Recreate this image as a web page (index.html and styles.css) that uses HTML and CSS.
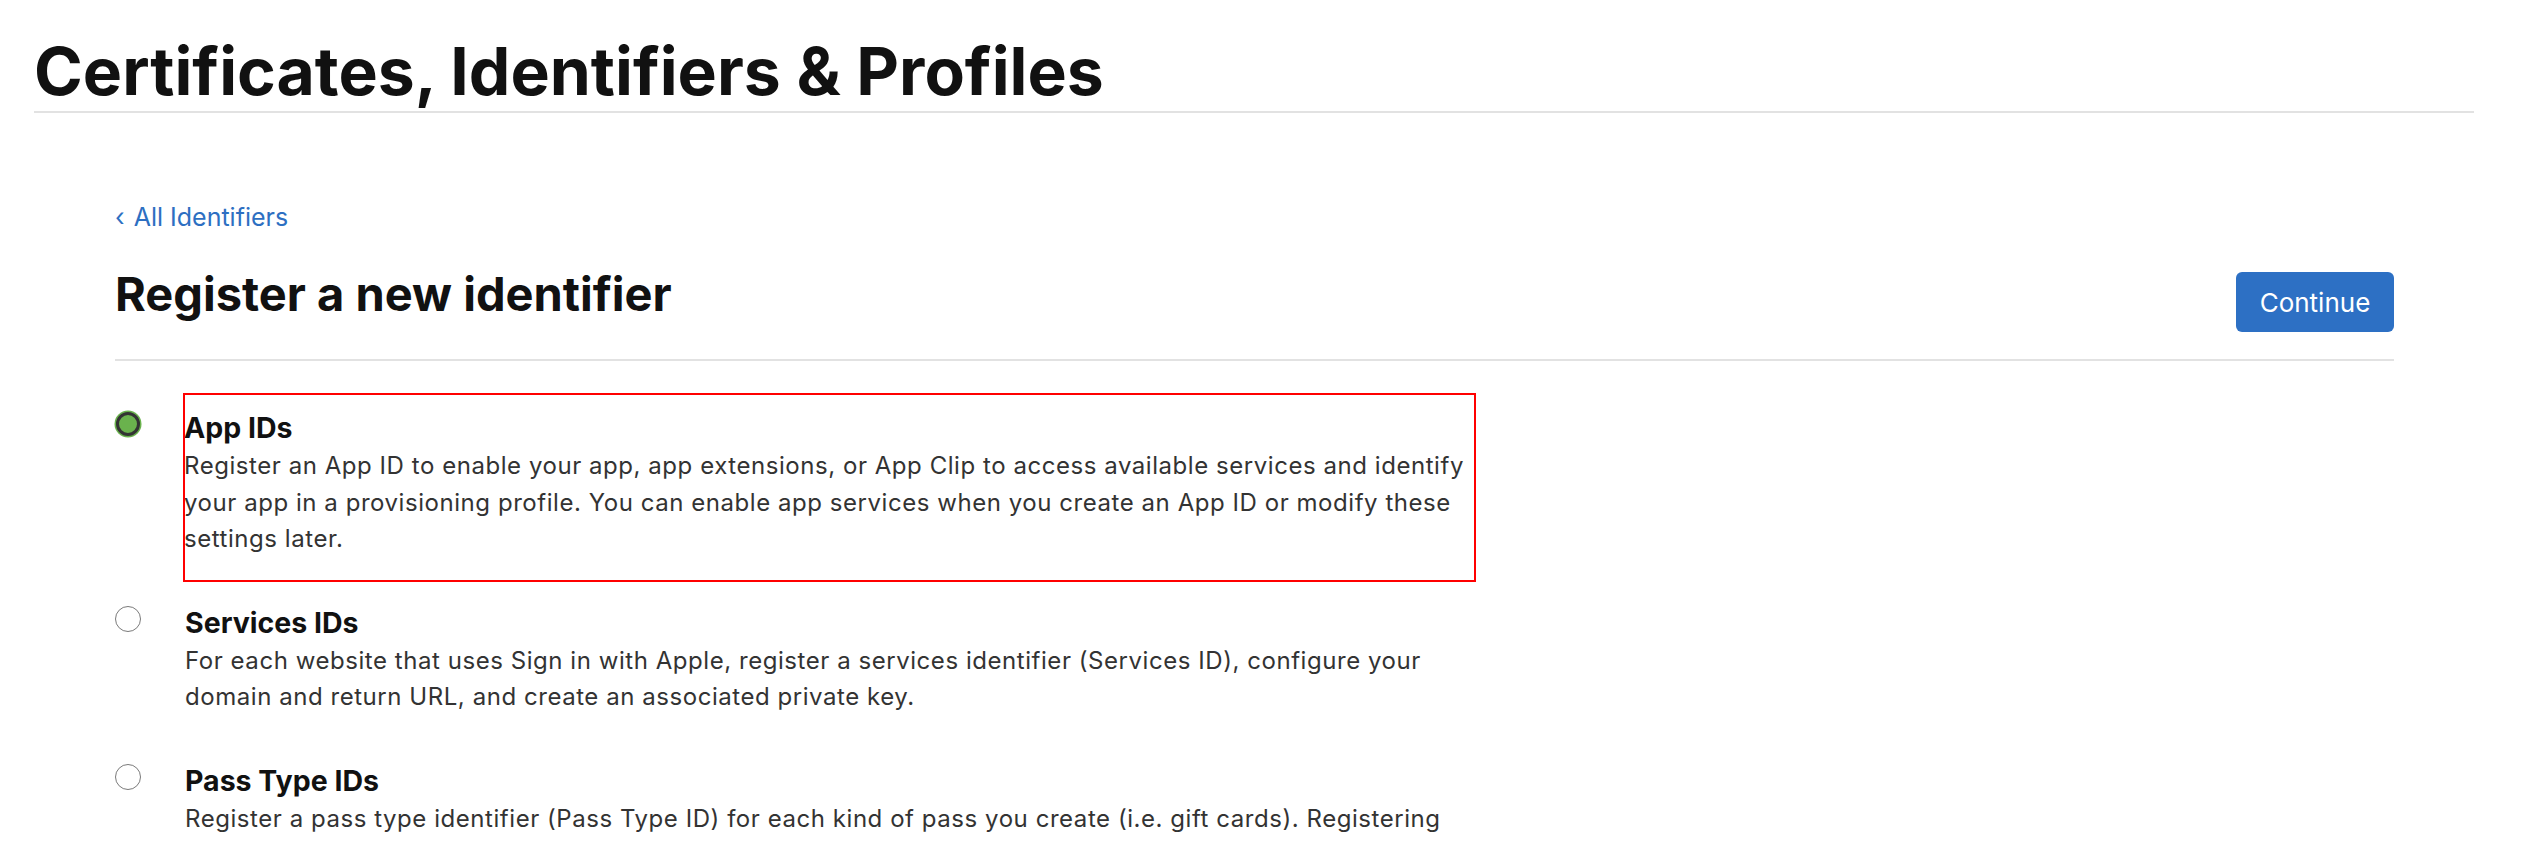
FILE: index.html
```html
<!DOCTYPE html>
<html lang="en">
<head>
<meta charset="utf-8">
<title>Certificates, Identifiers &amp; Profiles</title>
<link rel="stylesheet" href="styles.css">
</head>
<body>
<header class="page-header">
  <h1 class="page-title">Certificates, Identifiers &amp; Profiles</h1>
</header>
<main class="content">
  <a class="back-link" href="#"><span class="chev">‹</span> All Identifiers</a>
  <div class="title-row">
    <h2 class="section-title">Register a new identifier</h2>
    <button class="btn-primary" type="button">Continue</button>
  </div>
  <ul class="options">
    <li class="option">
      <span class="radio checked"></span>
      <div class="option-body">
        <span class="highlight"></span>
        <div class="option-title">App IDs</div>
        <p class="option-desc">Register an App ID to enable your app, app extensions, or App Clip to access available services and identify your app in a provisioning profile. You can enable app services when you create an App ID or modify these settings later.</p>
      </div>
    </li>
    <li class="option">
      <span class="radio"></span>
      <div class="option-body">
        <div class="option-title">Services IDs</div>
        <p class="option-desc">For each website that uses Sign in with Apple, register a services identifier (Services ID), configure your domain and return URL, and create an associated private key.</p>
      </div>
    </li>
    <li class="option">
      <span class="radio"></span>
      <div class="option-body">
        <div class="option-title">Pass Type IDs</div>
        <p class="option-desc">Register a pass type identifier (Pass Type ID) for each kind of pass you create (i.e. gift cards). Registering your pass type identifiers lets you generate Apple-issued certificates which are used to digitally sign and send updates to your passes, and allow your passes to be recognized by Wallet.</p>
      </div>
    </li>
  </ul>
</main>
</body>
</html>
```

FILE: styles.css
```css
html, body {
  margin: 0;
  padding: 0;
  background: #ffffff;
}
body {
  font-family: Inter, "Noto Sans", "Liberation Sans", sans-serif;
  color: #1d1d1f;
  overflow: hidden;
  height: 842px;
}
.page-header {
  margin: 0 66px 0 34px;
  padding-top: 31px;
  border-bottom: 2px solid #e2e2e2;
}
.page-title {
  margin: 0;
  font-size: 66px;
  line-height: 80px;
  font-weight: 700;
  letter-spacing: 0;
  color: #111111;
}
.content {
  margin: 0 146px 0 115px;
  padding-top: 88px;
}
.back-link {
  display: inline-block;
  font-size: 25px;
  line-height: 32px;
  color: #2d6fc2;
  text-decoration: none;
  letter-spacing: 0;
}
.chev {
  margin-right: 2px;
}
.title-row {
  display: flex;
  justify-content: space-between;
  align-items: flex-start;
  margin-top: 34px;
  padding-bottom: 27px;
  border-bottom: 2px solid #e2e2e2;
}
.section-title {
  margin: 0;
  font-size: 47px;
  line-height: 54px;
  font-weight: 700;
  letter-spacing: 0;
  color: #111111;
}
.btn-primary {
  margin-top: 5px;
  width: 158px;
  height: 60px;
  border: none;
  border-radius: 6px;
  background: #2d70c4;
  color: #ffffff;
  font-family: inherit;
  font-size: 26px;
  font-weight: 400;
  letter-spacing: 0;
  padding: 0;
}
.options {
  list-style: none;
  margin: 0;
  padding: 50px 0 0;
}
.option {
  display: flex;
  align-items: flex-start;
  margin-bottom: 48px;
}
.radio {
  flex: none;
  box-sizing: border-box;
  width: 26px;
  height: 26px;
  border-radius: 50%;
  border: 1.5px solid #7a7a7a;
  background: #ffffff;
}
.radio.checked {
  width: 24px;
  height: 24px;
  margin: 1px 1px 0 1px;
  border: 3.5px solid #333333;
  background: #6ab24d;
  box-shadow: 0 0 0 1.5px #6ab24d;
}
.option-body {
  position: relative;
  margin-left: 44px;
  width: 1290px;
}
.radio.checked + .option-body {
  margin-left: 43px;
}
.option-title {
  font-size: 28.5px;
  line-height: 34px;
  font-weight: 700;
  color: #111111;
  letter-spacing: 0;
}
.option-desc {
  margin: 3px 0 0;
  font-size: 24px;
  line-height: 36.5px;
  color: #333333;
  letter-spacing: 0.55px;
}
.highlight {
  position: absolute;
  left: -1px;
  top: -18px;
  width: 1293px;
  bottom: -24px;
  box-sizing: border-box;
  border: 2px solid #ff0000;
  pointer-events: none;
}
```
